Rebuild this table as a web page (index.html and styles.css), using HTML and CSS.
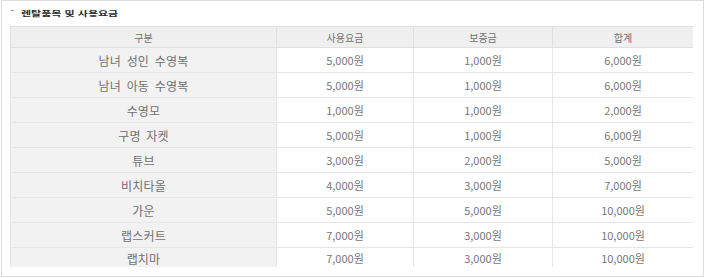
FILE: index.html
```html
<!DOCTYPE html>
<html lang="ko">
<head>
<meta charset="utf-8">
<link rel="stylesheet" href="styles.css">
</head>
<body>
<div class="box">
  <div class="title"><span class="dash"></span><span class="title-text">렌탈품목 및 사용요금</span></div>
  <div class="table-wrap">
    <table class="fees">
      <colgroup>
        <col class="c1"><col class="c2"><col class="c3"><col class="c4">
      </colgroup>
      <thead>
        <tr><th>구분</th><th>사용요금</th><th>보증금</th><th>합계</th></tr>
      </thead>
      <tbody>
        <tr><th>남녀 성인 수영복</th><td>5,000원</td><td>1,000원</td><td>6,000원</td></tr>
        <tr><th>남녀 아동 수영복</th><td>5,000원</td><td>1,000원</td><td>6,000원</td></tr>
        <tr><th>수영모</th><td>1,000원</td><td>1,000원</td><td>2,000원</td></tr>
        <tr><th>구명 자켓</th><td>5,000원</td><td>1,000원</td><td>6,000원</td></tr>
        <tr><th>튜브</th><td>3,000원</td><td>2,000원</td><td>5,000원</td></tr>
        <tr><th>비치타올</th><td>4,000원</td><td>3,000원</td><td>7,000원</td></tr>
        <tr><th>가운</th><td>5,000원</td><td>5,000원</td><td>10,000원</td></tr>
        <tr><th>랩스커트</th><td>7,000원</td><td>3,000원</td><td>10,000원</td></tr>
        <tr class="last"><th>랩치마</th><td>7,000원</td><td>3,000원</td><td>10,000원</td></tr>
      </tbody>
    </table>
  </div>
</div>
</body>
</html>
```
FILE: styles.css
```css
html, body {
  margin: 0;
  padding: 0;
  background: #ffffff;
}
body {
  font-family: "Noto Sans CJK KR", "Noto Sans", sans-serif;
  color: #777;
}
.box {
  margin-left: 1px;
  width: 703px;
  height: 277px;
  box-sizing: border-box;
  border: 1px solid #dcdcdc;
  padding: 0 0 0 8px;
  overflow: hidden;
}
.title {
  height: 25px;
  display: flex;
  align-items: flex-start;
  gap: 7px;
}
.dash {
  display: block;
  width: 3px;
  height: 1px;
  background: #999;
  margin-top: 9px;
  margin-left: 1px;
}
.title-text {
  display: block;
  font-size: 11px;
  font-weight: bold;
  color: #2a2a2a;
  line-height: 12px;
  margin-top: 6px;
  transform: scaleY(0.6);
  transform-origin: 0 50%;
}
.table-wrap {
  width: 683px;
  height: 241px;
  overflow: hidden;
}
.fees {
  border-collapse: collapse;
  table-layout: fixed;
  width: 683px;
}
.c1 { width: 266px; }
.c2 { width: 137px; }
.c3 { width: 139px; }
.c4 { width: 141px; }
.fees th, .fees td {
  padding: 0;
  text-align: center;
  font-weight: normal;
  border: 1px solid #e6e6e6;
  height: 24px;
  font-size: 11px;
  color: #777;
}
.fees thead th {
  background: #efefef;
  height: 20px;
  font-size: 10px;
  color: #6f6f6f;
  border-color: #e0e0e0;
}
.fees tbody th {
  background: #f2f2f2;
  font-size: 12px;
  letter-spacing: 0.2px;
  word-spacing: 2px;
  color: #707070;
}
.fees tbody td {
  background: #fff;
}
.fees tr.last th, .fees tr.last td {
  height: 20px;
  border-bottom: none;
}
```
